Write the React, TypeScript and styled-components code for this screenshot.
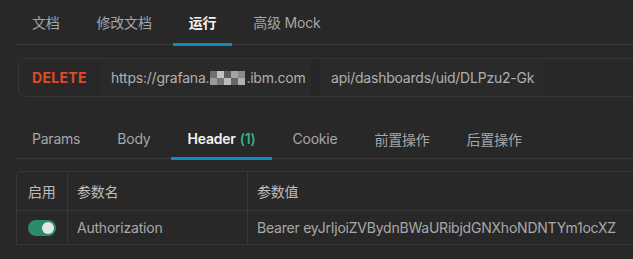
import React from "react";
import styled, { createGlobalStyle } from "styled-components";

const GlobalStyle = createGlobalStyle`
    html, body {
        margin: 0;
        padding: 0;
        background: #282828;
        overflow: hidden;
    }
    body {
        font-family: Inter, "Noto Sans CJK SC", sans-serif;
        font-size: 14px;
        letter-spacing: -0.22px;
        color: #a9a9a9;
    }
`;

const Page = styled.div`
    width: 633px;
    height: 259px;
    overflow: hidden;
    padding-left: 16px;
    box-sizing: border-box;
`;

const TabBar = styled.div<{ $height: number; $gap: number }>`
    display: flex;
    gap: ${p => p.$gap}px;
    height: ${p => p.$height}px;
    border-bottom: 1px solid #3a3a3a;
    box-sizing: border-box;
    width: 700px;
`;

const Tab = styled.div<{ $active?: boolean }>`
    position: relative;
    display: flex;
    align-items: center;
    padding: 0 16px;
    white-space: nowrap;
    color: ${p => (p.$active ? "#f2f2f2" : "#a6a6a6")};
    font-weight: ${p => (p.$active ? 600 : 400)};
    &::after {
        content: "";
        display: ${p => (p.$active ? "block" : "none")};
        position: absolute;
        left: 0;
        right: 0;
        bottom: -2px;
        height: 3px;
        background: #118bbf;
    }
`;

const Count = styled.span`
    color: #31b38c;
    margin-left: 4px;
`;

const UrlBox = styled.div`
    display: flex;
    align-items: stretch;
    margin: 13px 0 0 2px;
    height: 39px;
    width: 700px;
    border: 1px solid #353535;
    border-radius: 7px;
    box-sizing: border-box;
`;

const Method = styled.div`
    display: flex;
    align-items: center;
    width: 81px;
    padding-left: 13px;
    box-sizing: border-box;
    color: #e2492b;
    font-weight: 700;
    letter-spacing: 0.3px;
`;

const UrlPart = styled.div<{ $width: number }>`
    display: flex;
    align-items: center;
    width: ${p => p.$width}px;
    padding: 0 11px;
    box-sizing: border-box;
    background: #2a2a2a;
    color: #b0b0b0;
    white-space: nowrap;
`;

const UrlGap = styled.div`
    width: 9px;
    background: #262626;
`;

const Mosaic = styled.span`
    display: inline-grid;
    grid-template-columns: repeat(5, 7px);
    grid-template-rows: repeat(2, 7px);
    margin: 0 1px;
    vertical-align: middle;
`;

const Pixel = styled.span<{ $shade: string }>`
    background: ${p => p.$shade};
`;

const SubTabs = styled(TabBar)`
    margin-top: 22px;
`;

const Table = styled.div`
    margin-top: 12px;
    width: 700px;
    border: 1px solid #373737;
    border-radius: 4px 0 0 0;
    display: grid;
    grid-template-columns: 50px 180px 1fr;
`;

const Cell = styled.div<{ $height: number; $head?: boolean }>`
    display: flex;
    align-items: center;
    height: ${p => p.$height}px;
    padding: 0 9px;
    box-sizing: border-box;
    white-space: nowrap;
    color: ${p => (p.$head ? "#bdbdbd" : "#a9a9a9")};
    border-left: 1px solid #373737;
    &:nth-child(3n + 1) {
        border-left: none;
        padding: 0 11px;
    }
`;

const HeadCell = styled(Cell)`
    border-bottom: 1px solid #373737;
`;

const Switch = styled.span`
    display: flex;
    align-items: center;
    justify-content: flex-end;
    width: 28px;
    height: 16px;
    padding: 0 2px;
    box-sizing: border-box;
    border-radius: 8px;
    background: #2d8a6c;
`;

const Knob = styled.span`
    width: 12px;
    height: 12px;
    border-radius: 50%;
    background: #e6e6e6;
`;

const shades = [
    "#6f6f6f", "#c2c2c2", "#5c5c5c", "#a5a5a5", "#8a8a8a",
    "#9a9a9a", "#777777", "#bcbcbc", "#666666", "#b0b0b0"
];

const topTabs = ["文档", "修改文档", "运行", "高级 Mock"];
const subTabs = ["Params", "Body", "Header", "Cookie", "前置操作", "后置操作"];

const App = () => {
    return (
        <Page>
            <GlobalStyle />
            <TabBar $height={45} $gap={5}>
                {topTabs.map(t => (
                    <Tab key={t} $active={t === "运行"}>
                        {t}
                    </Tab>
                ))}
            </TabBar>
            <UrlBox>
                <Method>DELETE</Method>
                <UrlPart $width={211}>
                    https://grafana.
                    <Mosaic>
                        {shades.map((s, i) => (
                            <Pixel key={i} $shade={s} />
                        ))}
                    </Mosaic>
                    .ibm.com
                </UrlPart>
                <UrlGap />
                <UrlPart $width={223}>api/dashboards/uid/DLPzu2-Gk</UrlPart>
            </UrlBox>
            <SubTabs $height={40} $gap={5}>
                {subTabs.map(t => (
                    <Tab key={t} $active={t === "Header"}>
                        {t}
                        {t === "Header" && <Count>(1)</Count>}
                    </Tab>
                ))}
            </SubTabs>
            <Table>
                <HeadCell $height={39} $head>启用</HeadCell>
                <HeadCell $height={39} $head>参数名</HeadCell>
                <HeadCell $height={39} $head>参数值</HeadCell>
                <Cell $height={33}>
                    <Switch>
                        <Knob />
                    </Switch>
                </Cell>
                <Cell $height={33}>Authorization</Cell>
                <Cell $height={33}>
                    Bearer eyJrIjoiZVBydnBWaURibjdGNXhoNDNTYm1ocXZ
                </Cell>
            </Table>
        </Page>
    );
};

export default App;
